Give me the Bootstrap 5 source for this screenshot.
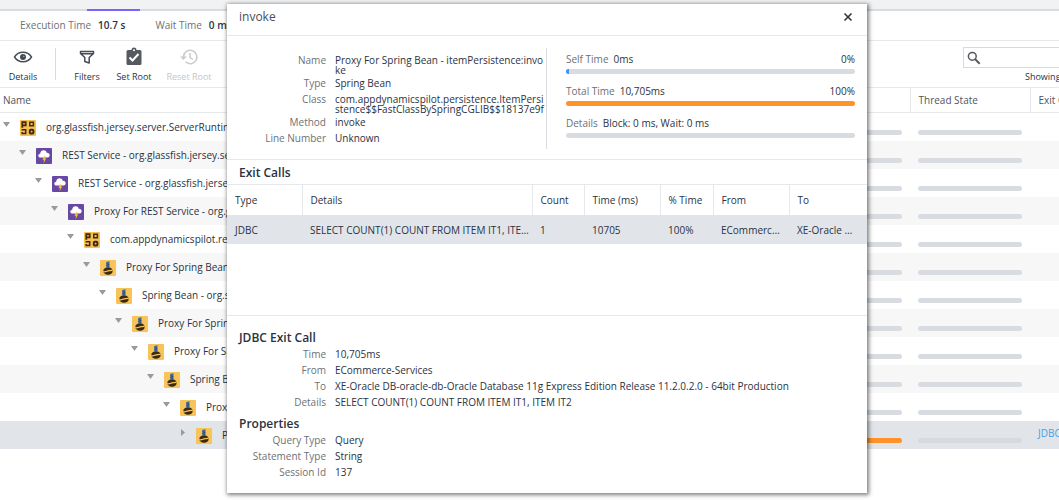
<!DOCTYPE html>
<html lang="en">
<head>
<meta charset="utf-8">
<meta name="viewport" content="width=device-width, initial-scale=1">
<title>Call Graph</title>
<link href="https://cdn.jsdelivr.net/npm/bootstrap@5.3.0/dist/css/bootstrap.min.css" rel="stylesheet">
<style>
  :root { --ink: #2a3242; --soft: #6d7075; --line: #e6e9ec; --track: #d8dce0; --picked: #e1e5ea; --hot: #ff9229; }
  body { font: 10px/16px "Open Sans", sans-serif; color: var(--ink); background: #fff; overflow-x: hidden; }
  h1, h2, dl, dd, dt { margin: 0; font-weight: 400; }
  .page { min-height: 100vh; overflow: hidden; }
  .tabstrip { height: 11px; background: #f1f2f4; border-bottom: 2px solid var(--track); padding-left: 87px; }
  .tabstrip a { width: 53px; height: 11px; border-bottom: 2px solid #7b61ff; }
  .stats { height: 30px; border-bottom: 1px solid var(--line); padding: 0 0 2px 20px; gap: 30px; white-space: nowrap; }
  .stats span { color: var(--soft); margin-right: 7px; }
  .stats b, .heading { font-weight: 600; }
  .toolbar { height: 47px; border-bottom: 1px solid var(--line); gap: 1px; }
  .tool { border: 0; background: none; padding: 6px 0 0; font-size: 9px; line-height: 16px; font-weight: 500; color: var(--ink); width: 46px; white-space: nowrap; }
  .tool svg { display: block; margin: 0 auto 2px; width: 20px; height: 20px; }
  .tool:disabled { color: #c4c6c9; }
  .split { width: 1px; height: 32px; margin: 7px 7px 0 8px; background: var(--track); }
  .finder { width: 96px; margin-top: 6px; }
  .searchbox { height: 21px; border: 1px solid #d5dce0; border-right: 0; padding-left: 3px; }
  .searchbox input { border: 0; outline: 0; width: 60px; background: none; }
  .showing { font-size: 9px; padding-left: 62px; white-space: nowrap; margin-top: 1px; }
  .tree, .exits { width: 100%; table-layout: fixed; border-collapse: collapse; }
  .tree th, .tree td { padding: 0 8px; white-space: nowrap; overflow: hidden; font-weight: 400; }
  .tree th { height: 24px; border-bottom: 1px solid var(--line); color: #50545c; }
  .tree th:first-child { padding-left: 3px; }
  .tree th + th { border-left: 1px solid var(--line); }
  .tree td { height: 28px; }
  .tree td:first-child { padding: 0; }
  .tree tbody tr:nth-child(even) { background: #f7f7f7; }
  .tree tbody tr.picked, .exits .picked { background: var(--picked); }
  .tree a { display: block; padding-bottom: 4px; color: #4a9fe6; text-decoration: none; }
  .node { height: 28px; padding-left: calc(3px + 16px * var(--depth)); }
  .node svg { flex: none; }
  .node .arrow { width: 7px; height: 7px; margin: 0 10px 4px 0; }
  .node .kind { width: 16px; height: 16px; margin-right: 10px; margin-top: 2px; }
  .meter { height: 5px; border-radius: 3px; background: var(--track); overflow: hidden; }
  .meter div { height: 5px; }
  .tree .meter { margin-top: 11px; }
  .hot { background: var(--hot) !important; }
  .picked .faint { background: #d6dadd; }
  .overlay { padding: 4px 0 7px 35px; }
  .dialog { width: 100%; max-width: 640px; background: #fff; box-shadow: 1px 1px 4px 1px rgba(0,0,0,.5); }
  .titlebar { height: 32px; border-bottom: 1px solid var(--line); padding: 0 12px 6px; }
  .titlebar h1 { font-size: 12px; line-height: 16px; color: #4a4f58; }
  .closer { border: 0; background: none; padding: 0; width: 14px; height: 14px; line-height: 0; }
  .summary { border-bottom: 1px solid var(--line); padding: 12px 12px 10px 12px; min-height: 124px; }
  .facts > div { display: flex; min-height: 16px; }
  .facts dt { width: 87px; margin-right: 9px; text-align: right; color: var(--soft); flex: none; }
  .facts dd { line-height: 10px; padding-top: 3px; word-break: break-all; }
  .summary .facts { width: 307px; padding-top: 4px; }
  .gauges { border-left: 1px solid var(--track); padding: 3px 0 0 19px; }
  .gauges .soft { color: var(--soft); margin-right: 5px; }
  .gauges .meter { margin: 2px 0 9px; }
  .heading { font-size: 12px; line-height: 17px; }
  .exit-title { padding: 4px 12px 3px; border-bottom: 1px solid var(--line); }
  .exits-area { min-height: 131px; border-bottom: 1px solid var(--line); }
  .exits th, .exits td { padding: 0 8px; font-weight: 400; white-space: nowrap; overflow: hidden; text-overflow: ellipsis; }
  .exits th { height: 30px; }
  .exits td { height: 29px; }
  .exits th + th { border-left: 1px solid var(--line); }
  .exit-detail { padding: 13px 12px; }
  .exit-detail .heading + .facts + .heading { margin-top: 5px; }
</style>
</head>
<body>
<svg class="d-none" xmlns="http://www.w3.org/2000/svg">
  <symbol id="open" viewBox="0 0 7 7"><path d="M0 1h7L3.500 6z" fill="#9a9a9a"/></symbol>
  <symbol id="shut" viewBox="0 0 7 7"><path d="M2 0l4 3.500-4 3.500z" fill="#9a9a9a"/></symbol>
  <symbol id="pojo" viewBox="0 0 16 16"><rect width="16" height="16" rx="1" fill="#f7bf50"/><g fill="none" stroke="#3d2c12" stroke-width="1.500"><path d="M2.300 7.700V2.200h3.400v3.200H2.300" stroke-width="1.800"/><path d="M9.800 2.200h3.600v3.600H9.800zM1.500 9.800h4.200v3.600H2.200v-1.500"/><rect x="9.800" y="9.800" width="3.600" height="3.600" rx="1" stroke-width="2"/></g></symbol>
  <symbol id="rest" viewBox="0 0 16 16"><rect width="16" height="16" rx="1" fill="#6749a3"/><path d="M4.500 9.500C1.800 9.500 1.500 6 4.200 5.700 4.300 1.500 10 1.200 10.700 4.700 14.500 4.500 14.500 9.500 11.500 9.500z" fill="#fff"/><path d="M7.500 8.500h2L8.800 10.500h1.500L7.600 15l.3-3.300H6.500z" fill="#f5bd36"/></symbol>
  <symbol id="bean" viewBox="0 0 16 16"><rect width="16" height="16" rx="1" fill="#f8c459"/><path d="M6.200 2l3.300-.7v6H6.200z" fill="#3f6d9c"/><path d="M6.500 3.500l2.700 1-2.700 1 2.700 1" stroke="#233f66" fill="none" stroke-width=".5"/><ellipse cx="8" cy="11" rx="4.700" ry="3.800" fill="#3b2a14"/><path d="M3 11.500c2.200 1 3.200-.2 5-.7s3 .1 4.800-.8" stroke="#f8c459" fill="none" stroke-width="1.200"/></symbol>
</svg>

<div class="page position-relative">
  <nav class="tabstrip d-flex"><a href="#" aria-label="Call graph"></a></nav>
  <div class="stats d-flex align-items-center">
    <div><span>Execution Time</span><b>10.7 s</b></div>
    <div><span>Wait Time</span><b>0 ms</b></div>
  </div>
  <div class="toolbar d-flex align-items-start">
    <button class="tool" type="button"><svg viewBox="0 0 20 20" fill="none" stroke="#454b55" stroke-width="1.400"><path d="M1.500 10C5.500 3.700 14.500 3.700 18.500 10 14.500 16.300 5.500 16.300 1.500 10z"/><circle cx="10" cy="10" r="2.300" fill="#454b55"/><circle cx="10.800" cy="9.200" r=".5" fill="#fff" stroke="none"/></svg>Details</button>
    <div class="split"></div>
    <button class="tool" type="button"><svg viewBox="0 0 20 20" fill="none" stroke="#454b55" stroke-width="1.500" stroke-linejoin="round"><path d="M3.500 4.500h13v2l-4.300 4v5.500l-4.400-1.500v-4l-4.300-4zM4 6.800h12"/></svg>Filters</button>
    <button class="tool" type="button"><svg viewBox="0 0 20 20"><path d="M4 3h3.500a2.500 2.500 0 0 1 5 0H16q1.500 0 1.500 1.500v12Q17.500 18 16 18H4q-1.500 0-1.500-1.500v-12Q2.500 3 4 3z" fill="#565a60"/><circle cx="10" cy="3.200" r="1" fill="#fff"/><path d="M5.500 10.500l3 3 6-6.500" fill="none" stroke="#fff" stroke-width="2"/></svg>Set Root</button>
    <button class="tool ms-2" type="button" disabled><svg viewBox="0 0 20 20" fill="none" stroke="#c9cbce" stroke-width="1.500"><path d="M4.500 10a6.700 6.700 0 1 1 2 4.800M11 6v4.500l3 2"/><path d="M1 9.500h7L4.500 13z" fill="#c9cbce" stroke="none"/></svg>Reset Root</button>
    <div class="finder ms-auto">
      <div class="searchbox d-flex align-items-center">
        <svg width="14" height="14" viewBox="0 0 14 14" fill="none" stroke="#555a60" stroke-width="1.500"><circle cx="5.300" cy="5.300" r="3.900"/><path d="M8.200 8.200l4.500 4.500" stroke-width="2"/></svg>
        <input type="search" aria-label="Search">
      </div>
      <div class="showing">Showing</div>
    </div>
  </div>

  <table class="tree">
    <colgroup><col><col style="width:150px"><col style="width:120px"><col style="width:29px"></colgroup>
    <thead><tr><th scope="col">Name</th><th scope="col"></th><th scope="col">Thread State</th><th scope="col">Exit Calls</th></tr></thead>
    <tbody id="calls"></tbody>
  </table>

  <div class="overlay position-absolute top-0 start-0 w-100 d-flex justify-content-center">
    <section class="dialog" role="dialog" aria-labelledby="dlg-title">
      <header class="titlebar d-flex align-items-center justify-content-between">
        <h1 id="dlg-title">invoke</h1>
        <button class="closer" type="button" aria-label="Close"><svg width="14" height="14" viewBox="0 0 14 14"><path d="M3.500 3.500l7 7M10.500 3.500l-7 7" stroke="#333" stroke-width="1.600"/></svg></button>
      </header>
      <div class="summary d-flex">
        <dl class="facts flex-shrink-0">
          <div><dt>Name</dt><dd>Proxy For Spring Bean - itemPersistence:invoke</dd></div>
          <div><dt>Type</dt><dd>Spring Bean</dd></div>
          <div><dt>Class</dt><dd>com.appdynamicspilot.persistence.ItemPersistence$$FastClassBySpringCGLIB$$18137e9f</dd></div>
          <div><dt>Method</dt><dd>invoke</dd></div>
          <div><dt>Line Number</dt><dd>Unknown</dd></div>
        </dl>
        <div class="gauges flex-grow-1">
          <div class="d-flex"><span class="soft">Self Time</span><span>0ms</span><span class="ms-auto">0%</span></div>
          <div class="meter"><div style="width:1%;background:#4090ff"></div></div>
          <div class="d-flex"><span class="soft">Total Time</span><span>10,705ms</span><span class="ms-auto">100%</span></div>
          <div class="meter"><div class="hot" style="width:100%"></div></div>
          <div class="d-flex"><span class="soft">Details</span><span>Block: 0 ms, Wait: 0 ms</span></div>
          <div class="meter"></div>
        </div>
      </div>
      <h2 class="heading exit-title">Exit Calls</h2>
      <div class="exits-area">
        <table class="exits">
          <colgroup><col style="width:75px"><col><col style="width:52px"><col style="width:76px"><col style="width:53px"><col style="width:76px"><col style="width:78px"></colgroup>
          <thead><tr><th scope="col">Type</th><th scope="col">Details</th><th scope="col">Count</th><th scope="col">Time (ms)</th><th scope="col">% Time</th><th scope="col">From</th><th scope="col">To</th></tr></thead>
          <tbody><tr class="picked"><td>JDBC</td><td class="pe-0">SELECT COUNT(1) COUNT FROM ITEM IT1, ITEM IT2</td><td>1</td><td>10705</td><td>100%</td><td>ECommerce-Services</td><td>XE-Oracle DB-oracle-db</td></tr></tbody>
        </table>
      </div>
      <div class="exit-detail">
        <h2 class="heading">JDBC Exit Call</h2>
        <dl class="facts">
          <div><dt>Time</dt><dd>10,705ms</dd></div>
          <div><dt>From</dt><dd>ECommerce-Services</dd></div>
          <div><dt>To</dt><dd>XE-Oracle DB-oracle-db-Oracle Database 11g Express Edition Release 11.2.0.2.0 - 64bit Production</dd></div>
          <div><dt>Details</dt><dd>SELECT COUNT(1) COUNT FROM ITEM IT1, ITEM IT2</dd></div>
        </dl>
        <h2 class="heading">Properties</h2>
        <dl class="facts">
          <div><dt>Query Type</dt><dd>Query</dd></div>
          <div><dt>Statement Type</dt><dd>String</dd></div>
          <div><dt>Session Id</dt><dd>137</dd></div>
        </dl>
      </div>
    </section>
  </div>
</div>
<script src="https://cdn.jsdelivr.net/npm/bootstrap@5.3.0/dist/js/bootstrap.bundle.min.js"></script>
<script>
  const calls = [
    ["pojo", "org.glassfish.jersey.server.ServerRuntime"],
    ["rest", "REST Service - org.glassfish.jersey.ser"],
    ["rest", "REST Service - org.glassfish.jersey"],
    ["rest", "Proxy For REST Service - org.g"],
    ["pojo", "com.appdynamicspilot.res"],
    ["bean", "Proxy For Spring Bean"],
    ["bean", "Spring Bean - org.s"],
    ["bean", "Proxy For Spring"],
    ["bean", "Proxy For Sp"],
    ["bean", "Spring B"],
    ["bean", "Prox"],
    ["bean", "P"]
  ];
  document.getElementById("calls").innerHTML = calls.map(([kind, name], i) => {
    const last = i === calls.length - 1;
    return `<tr class="${last ? "picked" : ""}">
      <td><div class="node d-flex align-items-center" style="--depth:${i}"><svg class="arrow"><use href="#${last ? "shut" : "open"}"/></svg><svg class="kind"><use href="#${kind}"/></svg>${name}</div></td>
      <td><div class="meter ${last ? "hot" : ""}"></div></td>
      <td><div class="meter faint"></div></td>
      <td>${last ? '<a href="#">JDBC</a>' : ""}</td></tr>`;
  }).join("");
</script>
</body>
</html>
